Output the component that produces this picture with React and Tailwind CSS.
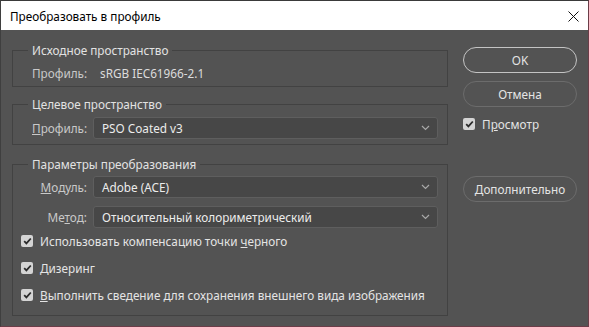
import React from "react";

const Chevron = () => (
  <svg width="9" height="6" viewBox="0 0 9 6" fill="none" className="shrink-0">
    <path d="M1 1l3.5 3.5L8 1" stroke="#a8a8a8" strokeWidth="1.2" />
  </svg>
);

const Check = ({ checked = true }) => (
  <span className="w-[12px] h-[12px] rounded-[2px] bg-[#d4d4d4] flex items-center justify-center shrink-0">
    {checked && (
      <svg width="9" height="8" viewBox="0 0 9 8" fill="none">
        <path d="M1.2 4.2l2.2 2.2L7.8 1.5" stroke="#2b2b2b" strokeWidth="1.8" />
      </svg>
    )}
  </span>
);

const Select = ({ value }) => (
  <div className="flex-1 h-[22px] rounded-[3px] border border-[#5e5e5e] bg-[#474747] flex items-center justify-between pl-[8px] pr-[7px] text-[#ececec]">
    <span>{value}</span>
    <Chevron />
  </div>
);

const Button = ({ children, strong }) => (
  <div
    className={
      "h-[26px] w-[114px] rounded-full flex items-center justify-center text-[#e4e4e4] " +
      (strong ? "border-[1.5px] border-[#c4c4c4]" : "border-[1.5px] border-[#6c6c6c]")
    }
  >
    {children}
  </div>
);

const CheckRow = ({ children }) => (
  <div className="flex items-center h-[16px] gap-[7px]">
    <Check />
    <span className="text-[#e4e4e4]">{children}</span>
  </div>
);

const Group = ({ title, className = "", children }) => (
  <fieldset className={"border border-[#424242] " + className}>
    <legend className="ml-[15px] px-[4px] text-[#e2e2e2]">{title}</legend>
    {children}
  </fieldset>
);

export default function App() {
  return (
    <div
      className="w-[589px] h-[327px] bg-[#535353] border border-t-[#3a3a3a] border-l-[#3f3f3f] border-r-[#6b3d48] border-b-[#6b3d48] flex flex-col text-[11.75px] leading-[16px]"
      style={{ fontFamily: '"Noto Sans", "Open Sans", sans-serif' }}
    >
      <div className="h-[29px] bg-white flex items-center justify-between pl-[9px] pr-[9px] text-black shrink-0">
        <span className="mt-[1px]">Преобразовать в профиль</span>
        <svg width="11" height="11" viewBox="0 0 11 11" className="mt-[1px]">
          <path d="M0.5 0.5l10 10M10.5 0.5l-10 10" stroke="#111" strokeWidth="1" />
        </svg>
      </div>

      <div className="flex pl-[11px] pt-[12px]">
        <div className="w-[436px] flex flex-col">
          <Group title="Исходное пространство">
            <div className="flex items-center h-[16px] mt-[7px] mb-[5px] pl-[19px] text-[#c9c9c9]">
              <span className="w-[68px]">Профиль:</span>
              <span className="text-[#dcdcdc]">sRGB IEC61966-2.1</span>
            </div>
          </Group>

          <Group title="Целевое пространство" className="mt-[9px]">
            <div className="flex items-center mt-[5px] mb-[5px] pl-[19px] pr-[9px] gap-[6px]">
              <span className="w-[55px] text-[#c9c9c9]">
                <u>П</u>рофиль:
              </span>
              <Select value="PSO Coated v3" />
            </div>
          </Group>

          <Group title="Параметры преобразования" className="mt-[11px]">
            <div className="flex flex-col pl-[8px] pr-[9px] pb-[12px]">
              <div className="flex items-center mt-[4px] gap-[6px]">
                <span className="w-[66px] text-right text-[#c9c9c9]">
                  <u>М</u>одуль:
                </span>
                <Select value="Adobe (ACE)" />
              </div>
              <div className="flex items-center mt-[8px] gap-[6px]">
                <span className="w-[66px] text-right text-[#c9c9c9]">
                  Ме<u>т</u>од:
                </span>
                <Select value="Относительный колориметрический" />
              </div>
              <div className="flex flex-col gap-[11px] mt-[5px]">
                <CheckRow>
                  Использовать компенсацию точки <u>ч</u>ерного
                </CheckRow>
                <CheckRow>
                  <u>Д</u>изеринг
                </CheckRow>
                <CheckRow>
                  <u>В</u>ыполнить сведение для сохранения внешнего вида изображения
                </CheckRow>
              </div>
            </div>
          </Group>
        </div>

        <div className="ml-[15px] flex flex-col pt-[5px]">
          <Button strong>OK</Button>
          <div className="mt-[8px]">
            <Button>Отмена</Button>
          </div>
          <div className="flex items-center gap-[7px] mt-[9px] h-[16px]">
            <Check />
            <span className="text-[#e4e4e4]">
              П<u>р</u>осмотр
            </span>
          </div>
          <div className="mt-[44px]">
            <Button>Дополнительно</Button>
          </div>
        </div>
      </div>
    </div>
  );
}
